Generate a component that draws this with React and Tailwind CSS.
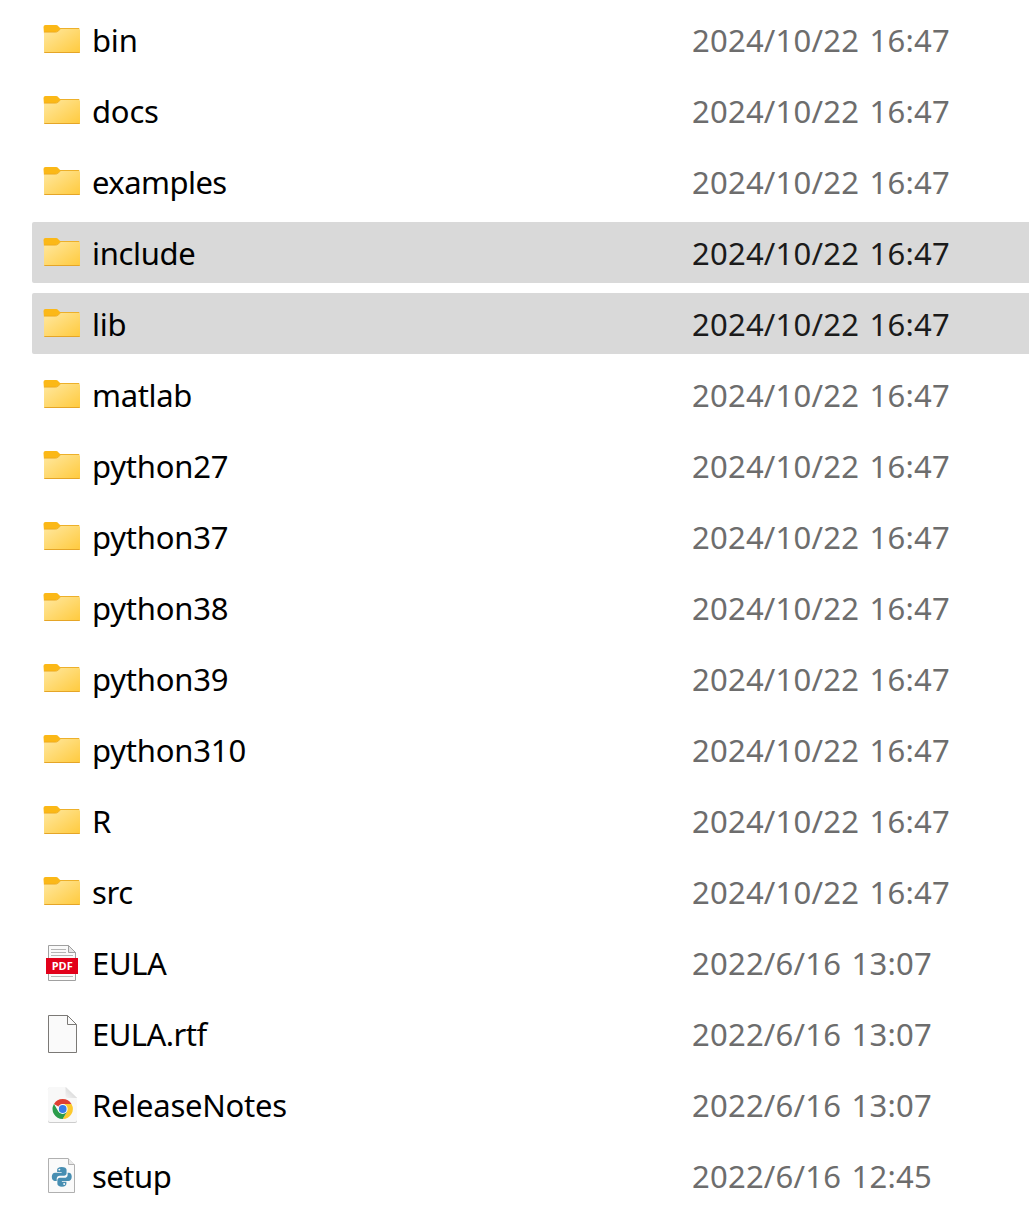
const recent = '2024/10/22 16:47';
const files = [
  { name: 'bin', date: recent, type: 'folder' },
  { name: 'docs', date: recent, type: 'folder' },
  { name: 'examples', date: recent, type: 'folder', tracking: 'tracking-[-0.55px]' },
  { name: 'include', date: recent, type: 'folder', selected: true, tracking: 'tracking-[-0.35px]' },
  { name: 'lib', date: recent, type: 'folder', selected: true },
  { name: 'matlab', date: recent, type: 'folder', tracking: 'tracking-[-0.35px]' },
  { name: 'python27', date: recent, type: 'folder' },
  { name: 'python37', date: recent, type: 'folder' },
  { name: 'python38', date: recent, type: 'folder' },
  { name: 'python39', date: recent, type: 'folder' },
  { name: 'python310', date: recent, type: 'folder' },
  { name: 'R', date: recent, type: 'folder' },
  { name: 'src', date: recent, type: 'folder', tracking: 'tracking-[-0.35px]' },
  { name: 'EULA', date: '2022/6/16 13:07', type: 'pdf', tracking: 'tracking-[-0.35px]' },
  { name: 'EULA.rtf', date: '2022/6/16 13:07', type: 'file', tracking: 'tracking-[-0.55px]' },
  { name: 'ReleaseNotes', date: '2022/6/16 13:07', type: 'chrome', tracking: 'tracking-[-0.25px]' },
  { name: 'setup', date: '2022/6/16 12:45', type: 'python', tracking: 'tracking-[-0.5px]' },
];

function Folder() {
  return (
    <g>
      <path d="M7.500 18q0-2 2-2h10.500q1.500 0 2.300 1.200L25 20v5H8z" fill="#fbb817" />
      <path d="M8 23h11.500q1.500 0 2.500-1l1.500-1.200q.8-.8 2-.8H43q1 0 1 1v22q0 1-1 1H9q-1 0-1-1z" fill="url(#folderBody)" />
      <path d="M8 23.200H19.500q1.500 0 2.500-1l1.800-1.500" fill="none" stroke="#e9a51b" strokeWidth=".7" />
      <path d="M24 19.500H43.300" stroke="#edb02a" strokeWidth="1" />
      <path d="M8.300 43.500H43.700" stroke="#e5a527" strokeWidth="1" />
    </g>
  );
}

function Pdf() {
  return (
    <g>
      <path d="M12.500 13.500H32.500L39.500 20.500V48.500H12.500z" fill="#fafafa" stroke="#a0a0a0" />
      <path d="M32.500 13.500V20.500H39.500z" fill="#e6e6e6" stroke="#a0a0a0" />
      <path d="M15 17.500H30M15 20.500H30M15 23.500H37M15 44.500H37" stroke="#b5b5b5" />
      <rect x="10" y="26" width="32" height="16" fill="#e2001a" />
      <text x="26.200" y="38" textAnchor="middle" fill="white" className="font-['Open_Sans'] text-[11px] font-bold">PDF</text>
    </g>
  );
}

function Page() {
  return (
    <g>
      <path d="M12.500 12.500H31.500L40.500 21.500V49.500H12.500z" fill="#fafafa" stroke="#7b7976" />
      <path d="M31.500 12.500V21.500H40.500" fill="none" stroke="#7b7976" />
    </g>
  );
}

function Chrome() {
  return (
    <g>
      <path d="M14 13.500H30L41 24V47q0 2-2 2H14q-2 0-2-2V15.500q0-2 2-2z" fill="#cdcdcd" />
      <path d="M14 13H30L41 24V46q0 2-2 2H14q-2 0-2-2V15q0-2 2-2z" fill="#f8f8f8" />
      <path d="M29.500 13V22q0 2 2 2H41z" fill="url(#chromeFold)" />
      <g transform="translate(26.700 35)">
        <path d="M0 0L-8.750-5.050A10.100 10.100 0 0 1 8.750-5.050z" fill="#df3f32" />
        <path d="M0-5.050H8.750A10.100 10.100 0 0 1 0 10.100L4.370 2.530z" fill="#fcc92d" />
        <path d="M-8.750-5.050A10.100 10.100 0 0 0 0 10.100L4.370 2.530L-4.370 2.530z" fill="#2b9b4b" />
        <circle r="4.900" fill="white" />
        <circle r="3.900" fill="#377de8" />
      </g>
    </g>
  );
}

function Python() {
  return (
    <g>
      <path d="M12.500 13.500H32L38.500 20V47.500H12.500z" fill="#fafafa" stroke="#b0b0b0" />
      <path d="M32.500 13.500V19.500H38.500" fill="#e8e8e8" stroke="#b0b0b0" />
      <g transform="translate(15.800 22) scale(.82)" fill="#478eb2">
        <path d="M12 0C8 0 6.500 1.700 6.500 3.500V6H12v.9H4C1.700 6.900 0 8.800 0 12s1.500 5 3.500 5H6v-2.700c0-2 1.700-3.500 3.700-3.500h5.200c1.800 0 3.100-1.400 3.100-3.100V3.500C18 1.400 15.800 0 12 0z" />
        <path d="M12.300 24c4 0 5.500-1.700 5.500-3.500V18h-5.500v-.9h8c2.300 0 4-1.900 4-5.100s-1.500-5-3.500-5h-1.500v2.700c0 2-1.700 3.500-3.700 3.500H9.800c-1.800 0-3 1.400-3 3.100v4.200c0 2.100 2 3.500 5.500 3.500z" />
        <circle cx="9.200" cy="3.200" r="1.200" fill="#f5fafc" />
        <circle cx="15.100" cy="20.800" r="1.200" fill="#f5fafc" />
      </g>
    </g>
  );
}

const icons = { folder: Folder, pdf: Pdf, file: Page, chrome: Chrome, python: Python };

function FileRow({ name, date, type, selected, tracking = 'tracking-[-0.2px]' }) {
  const Icon = icons[type];
  return (
    <div className={`flex h-[61px] shrink-0 items-center rounded-l-xs pl-1 ${selected ? 'bg-[#d9d9d9]' : ''}`}>
      <svg className="h-[61px] w-14 shrink-0" viewBox="0 0 56 61" aria-hidden="true"><Icon /></svg>
      <span className={`w-[600px] shrink-0 pt-px leading-10 text-black ${tracking}`}>{name}</span>
      <span className={`pt-px leading-10 tracking-[0.23px] [word-spacing:2px] whitespace-nowrap ${selected ? 'text-[#1b1b1b]' : 'text-[#6d6d6d]'}`}>{date}</span>
    </div>
  );
}

export default function App() {
  return (
    <main className="flex h-[1216px] flex-col gap-2.5 overflow-hidden bg-white pt-[9px] pl-8 font-['Noto_Sans',sans-serif] text-[31px]">
      <svg className="absolute size-0" aria-hidden="true">
        <defs>
          <linearGradient id="folderBody" x1="0" y1="0" x2="1" y2="1">
            <stop stopColor="#ffe8a0" />
            <stop offset="1" stopColor="#ffca3d" />
          </linearGradient>
          <linearGradient id="chromeFold" x1="0" y1="1" x2="1" y2="0">
            <stop stopColor="#f4f4f4" />
            <stop offset="1" stopColor="#c9c9c9" />
          </linearGradient>
        </defs>
      </svg>
      {files.map((file) => <FileRow key={file.name} {...file} />)}
    </main>
  );
}
